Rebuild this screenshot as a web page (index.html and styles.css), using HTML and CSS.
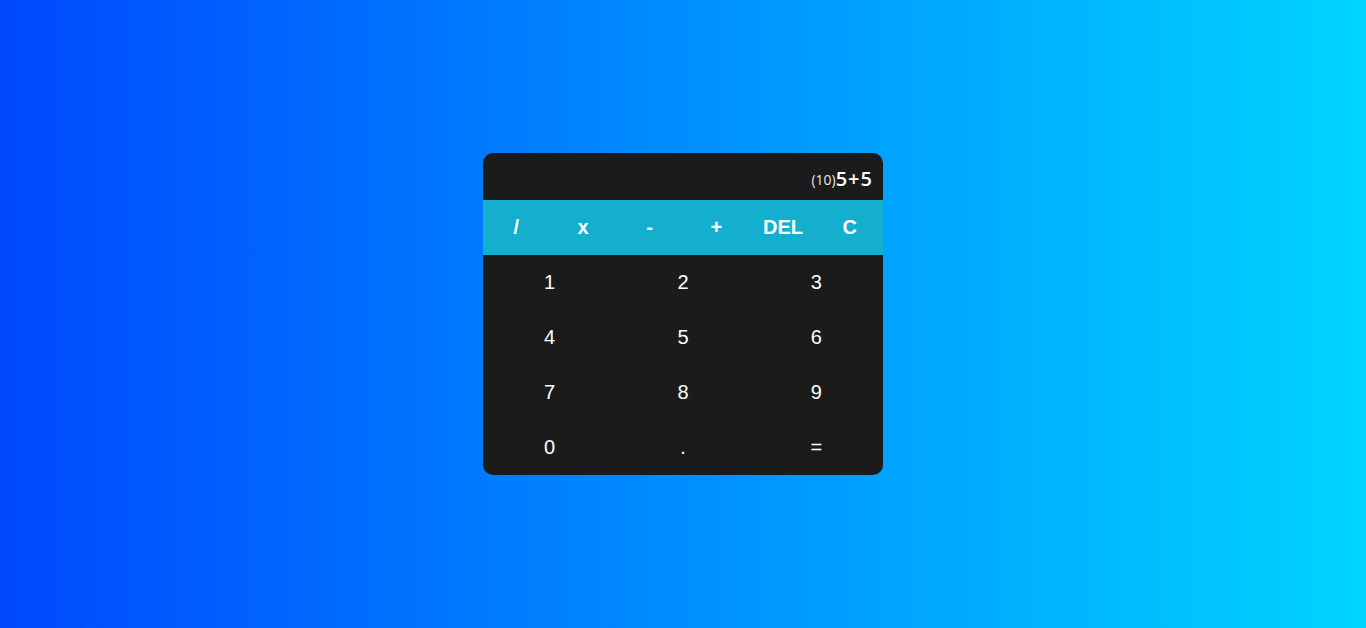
FILE: index.html
```html
<!DOCTYPE html>
<html>
<head>
<meta charset="utf-8">
<link rel="stylesheet" href="styles.css">
</head>
<body>
<div class="calc">
  <div class="display"><span class="result">(10)</span><span class="expr">5+5</span></div>
  <div class="ops">
    <button class="op">/</button>
    <button class="op">x</button>
    <button class="op">-</button>
    <button class="op">+</button>
    <button class="op">DEL</button>
    <button class="op">C</button>
  </div>
  <div class="keys">
    <button class="key">1</button>
    <button class="key">2</button>
    <button class="key">3</button>
    <button class="key">4</button>
    <button class="key">5</button>
    <button class="key">6</button>
    <button class="key">7</button>
    <button class="key">8</button>
    <button class="key">9</button>
    <button class="key">0</button>
    <button class="key">.</button>
    <button class="key">=</button>
  </div>
</div>
</body>
</html>
```
FILE: styles.css
```css
html, body {
  margin: 0;
  height: 100%;
}
body {
  background: linear-gradient(to right, #0048ff, #00d4ff);
  display: flex;
  align-items: center;
  justify-content: center;
  font-family: "Liberation Sans", Arial, sans-serif;
}
.calc {
  width: 400px;
  background: #1b1b1b;
  border-radius: 10px;
  overflow: hidden;
}
.display {
  height: 47px;
  display: flex;
  align-items: center;
  justify-content: flex-end;
  padding: 4px 10px 0 0;
  box-sizing: border-box;
  color: #fff;
  font-family: "Open Sans", "Noto Sans", sans-serif;
}
.result {
  font-size: 14px;
  color: #e8e8e8;
  margin-top: 2px;
}
.expr {
  font-size: 20px;
  font-weight: 600;
  letter-spacing: 1px;
}
.ops {
  display: grid;
  grid-template-columns: repeat(6, 1fr);
  background: #14afcf;
  height: 55px;
}
button {
  border: none;
  background: transparent;
  color: #fff;
  font-family: "Liberation Sans", Arial, sans-serif;
  font-size: 20px;
  padding: 0;
  margin: 0;
}
.op {
  font-weight: bold;
}
.keys {
  display: grid;
  grid-template-columns: repeat(3, 1fr);
  grid-auto-rows: 55px;
}
```
